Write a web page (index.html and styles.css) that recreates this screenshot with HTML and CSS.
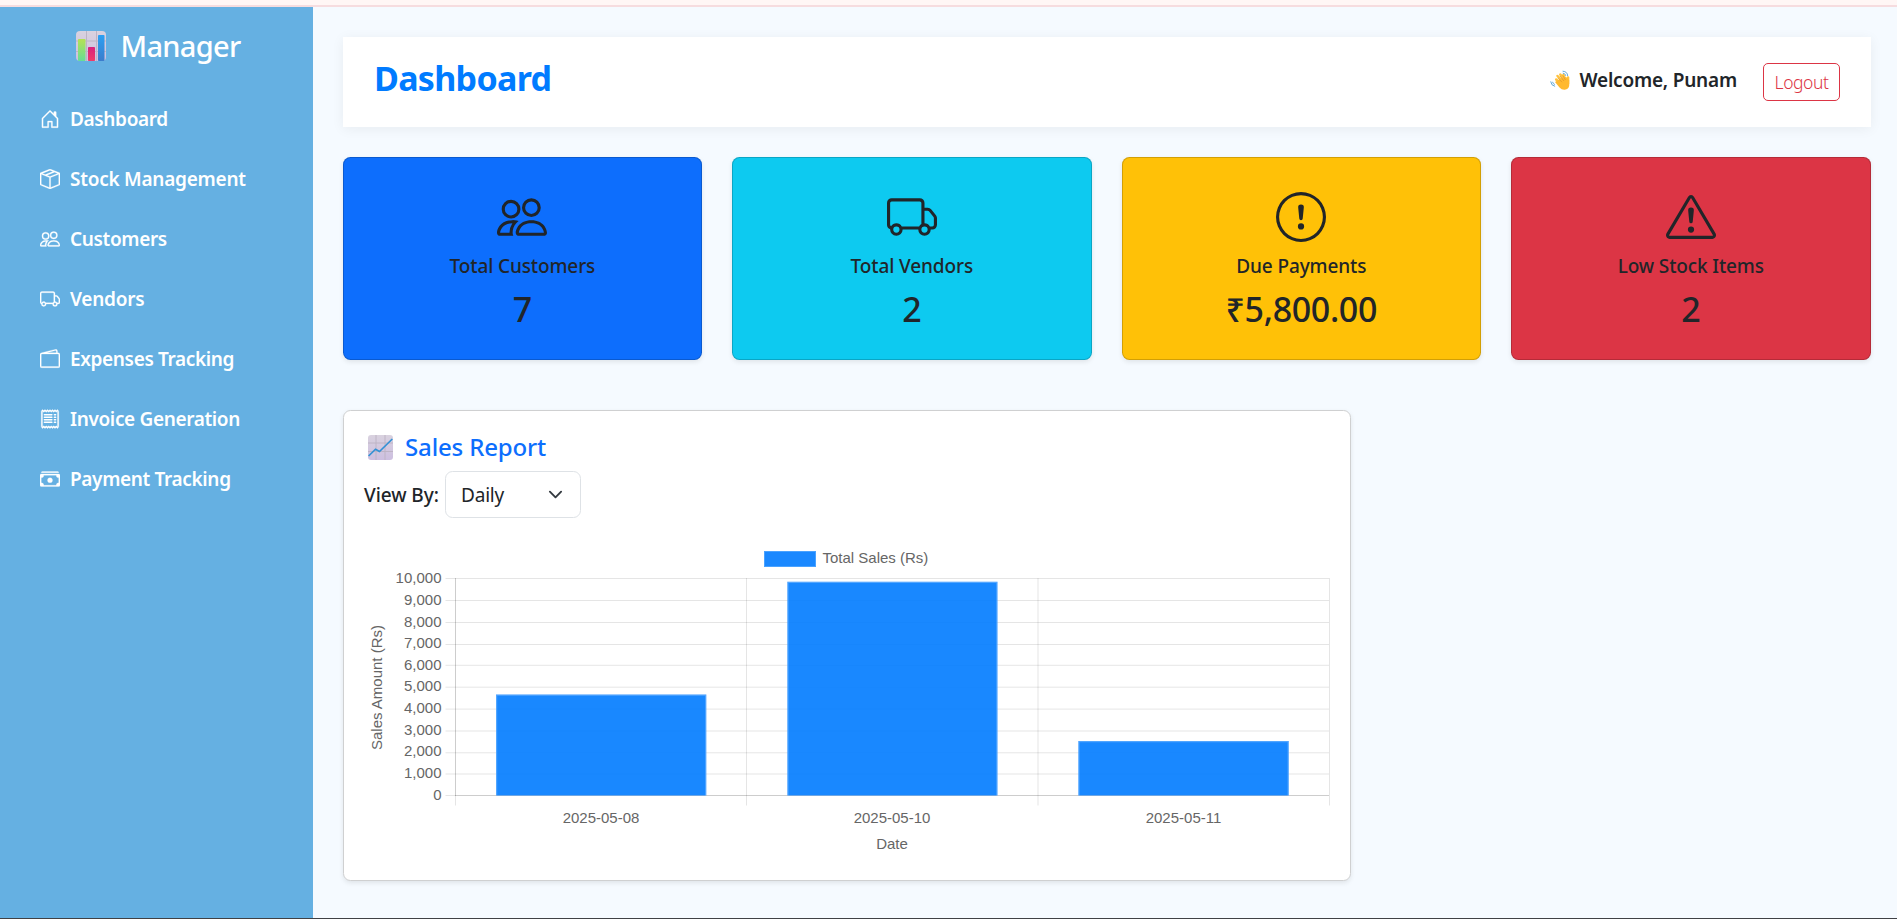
FILE: index.html
```html
<!DOCTYPE html>
<html lang="en">
<head>
<meta charset="utf-8">
<title>Dashboard</title>
<link rel="stylesheet" href="styles.css">
</head>
<body>
<svg class="sprite" aria-hidden="true">
  <symbol id="people" viewBox="0 0 16 16"><path d="M15 14s1 0 1-1-1-4-5-4-5 3-5 4 1 1 1 1zm-7.978-1L7 12.996c.001-.264.167-1.03.76-1.72C8.312 10.629 9.282 10 11 10c1.717 0 2.687.63 3.24 1.276.593.69.758 1.457.76 1.72l-.008.002-.014.002zM11 7a2 2 0 1 0 0-4 2 2 0 0 0 0 4m3-2a3 3 0 1 1-6 0 3 3 0 0 1 6 0M6.936 9.28a6 6 0 0 0-1.23-.247A7 7 0 0 0 5 9c-4 0-5 3-5 4q0 1 1 1h4.216A2.24 2.24 0 0 1 5 13c0-1.01.377-2.042 1.09-2.904.243-.294.526-.569.846-.816M4.92 10A5.5 5.5 0 0 0 4 13H1c0-.26.164-1.03.76-1.724.545-.636 1.492-1.256 3.16-1.275ZM1.5 5.5a3 3 0 1 1 6 0 3 3 0 0 1-6 0m3-2a2 2 0 1 0 0 4 2 2 0 0 0 0-4"/></symbol>
  <symbol id="truck" viewBox="0 0 16 16"><path d="M0 3.5A1.5 1.5 0 0 1 1.5 2h9A1.5 1.5 0 0 1 12 3.5V5h1.02a1.5 1.5 0 0 1 1.17.563l1.481 1.85a1.5 1.5 0 0 1 .329.938V10.5a1.5 1.5 0 0 1-1.5 1.5H14a2 2 0 1 1-4 0H5a2 2 0 1 1-3.998-.085A1.5 1.5 0 0 1 0 10.5zm1.294 7.456A2 2 0 0 1 4.732 11h5.536a2 2 0 0 1 .732-.732V3.5a.5.5 0 0 0-.5-.5h-9a.5.5 0 0 0-.5.5v7a.5.5 0 0 0 .294.456M12 10a2 2 0 0 1 1.732 1h.768a.5.5 0 0 0 .5-.5V8.35a.5.5 0 0 0-.11-.312l-1.48-1.85A.5.5 0 0 0 13.02 6H12zm-9 1a1 1 0 1 0 0 2 1 1 0 0 0 0-2m9 0a1 1 0 1 0 0 2 1 1 0 0 0 0-2"/></symbol>
  <symbol id="alert-circle" viewBox="0 0 16 16"><path d="M8 15A7 7 0 1 1 8 1a7 7 0 0 1 0 14m0 1A8 8 0 1 0 8 0a8 8 0 0 0 0 16"/><path d="M7.002 11a1 1 0 1 1 2 0 1 1 0 0 1-2 0M7.1 4.995a.905.905 0 1 1 1.8 0l-.35 3.507a.552.552 0 0 1-1.1 0z"/></symbol>
  <symbol id="alert-triangle" viewBox="0 0 16 16"><path d="M7.938 2.016A.13.13 0 0 1 8.002 2a.13.13 0 0 1 .063.016.15.15 0 0 1 .054.057l6.857 11.667c.036.06.035.124.002.183a.2.2 0 0 1-.054.06.1.1 0 0 1-.066.017H1.146a.1.1 0 0 1-.066-.017.2.2 0 0 1-.054-.06.18.18 0 0 1 .002-.183L7.884 2.073a.15.15 0 0 1 .054-.057m1.044-.45a1.13 1.13 0 0 0-1.96 0L.165 13.233c-.457.778.091 1.767.98 1.767h13.713c.889 0 1.438-.99.98-1.767z"/><path d="M7.002 12a1 1 0 1 1 2 0 1 1 0 0 1-2 0M7.1 5.995a.905.905 0 1 1 1.8 0l-.35 3.507a.552.552 0 0 1-1.1 0z"/></symbol>
  <symbol id="house" viewBox="0 0 16 16"><path d="M8.354 1.146a.5.5 0 0 0-.708 0l-6 6A.5.5 0 0 0 1.5 7.5v7a.5.5 0 0 0 .5.5h4.5a.5.5 0 0 0 .5-.5v-4h2v4a.5.5 0 0 0 .5.5H14a.5.5 0 0 0 .5-.5v-7a.5.5 0 0 0-.146-.354L13 5.793V2.5a.5.5 0 0 0-.5-.5h-1a.5.5 0 0 0-.5.5v1.293zM2.5 14V7.707l5.5-5.5 5.5 5.5V14H10v-4a.5.5 0 0 0-.5-.5h-3a.5.5 0 0 0-.5.5v4z"/></symbol>
  <symbol id="box" viewBox="0 0 16 16"><path d="M8.186 1.113a.5.5 0 0 0-.372 0L1.846 3.5l2.404.961L10.404 2zm3.564 1.426L5.596 5 8 5.961 14.154 3.5zm3.25 1.7-6.5 2.6v7.922l6.5-2.6V4.24zM7.5 14.762V6.838L1 4.239v7.923zM7.443.184a1.5 1.5 0 0 1 1.114 0l7.129 2.852A.5.5 0 0 1 16 3.5v8.662a1 1 0 0 1-.629.928l-7.185 2.874a.5.5 0 0 1-.372 0L.63 13.09a1 1 0 0 1-.63-.928V3.5a.5.5 0 0 1 .314-.464z"/></symbol>
  <symbol id="wallet" viewBox="0 0 16 16"><path d="M12.136.326A1.5 1.5 0 0 1 14 1.78V3h.5A1.5 1.5 0 0 1 16 4.5v9a1.5 1.5 0 0 1-1.5 1.5h-13A1.5 1.5 0 0 1 0 13.5v-9a1.5 1.5 0 0 1 1.432-1.499zM5.562 3H13V1.78a.5.5 0 0 0-.621-.484zM1.5 4a.5.5 0 0 0-.5.5v9a.5.5 0 0 0 .5.5h13a.5.5 0 0 0 .5-.5v-9a.5.5 0 0 0-.5-.5z"/></symbol>
  <symbol id="receipt" viewBox="0 0 16 16"><path d="M1.92.506a.5.5 0 0 1 .434.14L3 1.293l.646-.647a.5.5 0 0 1 .708 0L5 1.293l.646-.647a.5.5 0 0 1 .708 0L7 1.293l.646-.647a.5.5 0 0 1 .708 0L9 1.293l.646-.647a.5.5 0 0 1 .708 0l.646.647.646-.647a.5.5 0 0 1 .708 0l.646.647.646-.647a.5.5 0 0 1 .801.13l.5 1A.5.5 0 0 1 15 2v12a.5.5 0 0 1-.053.224l-.5 1a.5.5 0 0 1-.8.13L13 14.707l-.646.647a.5.5 0 0 1-.708 0L11 14.707l-.646.647a.5.5 0 0 1-.708 0L9 14.707l-.646.647a.5.5 0 0 1-.708 0L7 14.707l-.646.647a.5.5 0 0 1-.708 0L5 14.707l-.646.647a.5.5 0 0 1-.708 0L3 14.707l-.646.647a.5.5 0 0 1-.801-.13l-.5-1A.5.5 0 0 1 1 14V2a.5.5 0 0 1 .053-.224l.5-1a.5.5 0 0 1 .367-.27m.217 1.338L2 2.118v11.764l.137.274.51-.51a.5.5 0 0 1 .707 0l.646.647.646-.646a.5.5 0 0 1 .708 0l.646.646.646-.646a.5.5 0 0 1 .708 0l.646.646.646-.646a.5.5 0 0 1 .708 0l.646.646.646-.646a.5.5 0 0 1 .708 0l.646.646.646-.646a.5.5 0 0 1 .708 0l.509.509.137-.274V2.118l-.137-.274-.51.51a.5.5 0 0 1-.707 0L12 1.707l-.646.647a.5.5 0 0 1-.708 0L10 1.707l-.646.647a.5.5 0 0 1-.708 0L8 1.707l-.646.647a.5.5 0 0 1-.708 0L6 1.707l-.646.647a.5.5 0 0 1-.708 0L4 1.707l-.646.647a.5.5 0 0 1-.708 0z"/><path d="M3.5 4.5h6M3.5 6.5h6M3.5 8.5h6M3.5 10.5h6M11.5 4.5h1M11.5 6.5h1M11.5 8.5h1M11.5 10.5h1" stroke="currentColor" stroke-width="1.200" stroke-linecap="round"/></symbol>
  <symbol id="cash" viewBox="0 0 16 16"><path d="M1 3a1 1 0 0 1 1-1h12a1 1 0 0 1 1 1zm7 8a2 2 0 1 0 0-4 2 2 0 0 0 0 4"/><path d="M0 5a1 1 0 0 1 1-1h14a1 1 0 0 1 1 1v8a1 1 0 0 1-1 1H1a1 1 0 0 1-1-1zm3 0a2 2 0 0 1-2 2v4a2 2 0 0 1 2 2h10a2 2 0 0 1 2-2V7a2 2 0 0 1-2-2z"/></symbol>
</svg>

<div class="top-strip"></div>
<div class="layout">
  <aside class="sidebar">
    <div class="brand">
      <svg class="brand-icon" viewBox="0 0 30 30">
        <defs>
          <linearGradient id="tile" x2="0" y2="1"><stop stop-color="#d9d2df"/><stop offset="1" stop-color="#cdbfe0"/></linearGradient>
          <linearGradient id="green" x2="0" y2="1"><stop stop-color="#b5e254"/><stop offset="1" stop-color="#66dd96"/></linearGradient>
          <linearGradient id="pink" x2="0" y2="1"><stop stop-color="#d8217e"/><stop offset="1" stop-color="#f03b68"/></linearGradient>
          <linearGradient id="blue" x2="0" y2="1"><stop stop-color="#2ba0f3"/><stop offset="1" stop-color="#3c7ccc"/></linearGradient>
        </defs>
        <rect width="30" height="30" rx="4" fill="url(#tile)"/>
        <path d="M10.5 0v30M20.500 0v30M0 10h30M0 20.500h30" stroke="#bdb4c4"/>
        <rect x="2" y="8" width="7.500" height="22" rx=".8" fill="url(#green)"/>
        <rect x="12" y="16" width="7" height="14" rx=".8" fill="url(#pink)"/>
        <rect x="22" y="4" width="6.500" height="26" rx=".8" fill="url(#blue)"/>
      </svg>
      <span>Manager</span>
    </div>
    <nav class="nav">
      <a class="nav-item"><svg class="nav-icon"><use href="#house"/></svg><span>Dashboard</span></a>
      <a class="nav-item"><svg class="nav-icon"><use href="#box"/></svg><span class="t-loose">Stock Management</span></a>
      <a class="nav-item"><svg class="nav-icon"><use href="#people"/></svg><span>Customers</span></a>
      <a class="nav-item"><svg class="nav-icon"><use href="#truck"/></svg><span class="t-loose">Vendors</span></a>
      <a class="nav-item"><svg class="nav-icon"><use href="#wallet"/></svg><span>Expenses Tracking</span></a>
      <a class="nav-item"><svg class="nav-icon"><use href="#receipt"/></svg><span>Invoice Generation</span></a>
      <a class="nav-item"><svg class="nav-icon"><use href="#cash"/></svg><span>Payment Tracking</span></a>
    </nav>
  </aside>

  <main class="main">
    <header class="header">
      <h1 class="title">Dashboard</h1>
      <div class="user">
        <svg class="wave" viewBox="0 0 20 20">
          <g fill="none" stroke-linecap="round">
            <path d="M13 1.200q4.500.3 4.700 4.500M13.200 3.200q2.200.3 2.500 2.200M.7 11.800q.4 3.800 4 4.500M2.600 12.200q.3 1.600 1.900 2.200" stroke="#62a9db" stroke-width="1"/>
            <path d="M6.200 9.500l5 5M7.500 6l5.500 6M10.300 4.600l4.500 6M13.300 5l2.500 5" stroke="#ffc23e" stroke-width="2.500"/>
            <path d="M18 7.500v6" stroke="#ffc23e" stroke-width="2.600"/>
          </g>
          <path d="M5 12l7-4 4-1 3.200 3v5.500q-.5 4-4.500 4.200-3 .2-5.200-2.200z" fill="#ffb92f"/>
          <path d="M8 8.200l4 4M10 6l4 5M12.800 5.500l2.700 4.500" stroke="#d98c2b" stroke-width=".6"/>
        </svg>
        <span class="welcome">Welcome, Punam</span>
        <button class="logout">Logout</button>
      </div>
    </header>

    <section class="stats">
      <div class="stat stat-blue"><svg class="stat-icon"><use href="#people"/></svg><div class="stat-label">Total Customers</div><div class="stat-value">7</div></div>
      <div class="stat stat-cyan"><svg class="stat-icon"><use href="#truck"/></svg><div class="stat-label">Total Vendors</div><div class="stat-value">2</div></div>
      <div class="stat stat-yellow"><svg class="stat-icon"><use href="#alert-circle"/></svg><div class="stat-label">Due Payments</div><div class="stat-value">₹5,800.00</div></div>
      <div class="stat stat-red"><svg class="stat-icon"><use href="#alert-triangle"/></svg><div class="stat-label">Low Stock Items</div><div class="stat-value">2</div></div>
    </section>

    <section class="report">
      <h2 class="report-title">
        <svg class="report-icon" viewBox="0 0 25 25">
          <rect width="25" height="25" rx="3" fill="url(#tile)"/>
          <path d="M8 0v25M17 0v25M0 8h25M0 16.500h25" stroke="#bcb2c3" stroke-width=".9"/>
          <path d="M.6 21L7.500 14.200l4 2.300L24.300 4" fill="none" stroke="#3391d5" stroke-width="1.700"/>
        </svg>
        <span>Sales Report</span>
      </h2>
      <div class="filter">
        <span class="filter-label">View By:</span>
        <div class="select"><span>Daily</span><svg class="chevron" viewBox="0 0 16 16"><path d="m2 5 6 6 6-6" fill="none" stroke="#343a40" stroke-width="2" stroke-linecap="round" stroke-linejoin="round"/></svg></div>
      </div>
      <svg class="chart" viewBox="363 541 968 320">
        <rect x="764.500" y="551.500" width="51" height="15" fill="#1a88ff" stroke="#4aa2ff"/>
        <text x="822.500" y="563">Total Sales (Rs)</text>
        <g class="grid">
          <path d="M445.500 578.500H1329M445.500 600.500H1329M445.500 622.500H1329M445.500 644.500H1329M445.500 665.300H1329M445.500 687.200H1329M445.500 709.100H1329M445.500 731H1329M445.500 752.800H1329M445.500 774H1329M445.500 795.500H1329"/>
          <path d="M455.500 578V805.500M746.500 578V805.500M1038 578V805.500M1329.500 578V805.500"/>
          <path d="M455.500 578V796M455 795.500H1329"/>
        </g>
        <g class="bars">
          <path d="M496 795.500V694.500H706.300V795.500"/>
          <path d="M787.300 795.500V581.700H997.500V795.500"/>
          <path d="M1078.300 795.500V741H1288.800V795.500"/>
        </g>
        <g class="bar-edges">
          <path d="M496.600 795.500V695.100H705.700V795.500"/>
          <path d="M787.900 795.500V582.300H996.900V795.500"/>
          <path d="M1078.900 795.500V741.600H1288.200V795.500"/>
        </g>
        <g text-anchor="end">
          <text x="441.500" y="583">10,000</text><text x="441.500" y="605">9,000</text><text x="441.500" y="627">8,000</text><text x="441.500" y="648">7,000</text><text x="441.500" y="670">6,000</text><text x="441.500" y="691">5,000</text><text x="441.500" y="713">4,000</text><text x="441.500" y="735">3,000</text><text x="441.500" y="756">2,000</text><text x="441.500" y="778">1,000</text><text x="441.500" y="800">0</text>
        </g>
        <g text-anchor="middle">
          <text x="601" y="823">2025-05-08</text><text x="892" y="823">2025-05-10</text><text x="1183.500" y="823">2025-05-11</text>
          <text x="892" y="849">Date</text>
          <text transform="translate(382 687.500) rotate(-90)">Sales Amount (Rs)</text>
        </g>
      </svg>
    </section>
  </main>
</div>
<div class="bottom-strip"></div>
</body>
</html>
```
FILE: styles.css
```css
* { box-sizing: border-box; }
body {
  margin: 0;
  height: 919px;
  display: flex;
  flex-direction: column;
  overflow: hidden;
  background: #f5faff;
  color: #212529;
  font-family: "Noto Sans", "Open Sans", sans-serif;
}
h1, h2 { margin: 0; }
.sprite { display: none; }
.top-strip { flex: none; height: 7px; background: #fff6f5; border-bottom: 2px solid #f6dcdf; }
.bottom-strip { flex: none; height: 1px; background: #3f4145; }
.layout { flex: 1; min-height: 0; display: flex; }

.sidebar { flex: none; width: 313px; background: #65b0e2; color: #fff; }
.brand {
  display: flex;
  align-items: center;
  gap: 14.500px;
  height: 78px;
  padding-left: 76px;
  font-size: 29px;
  font-weight: 550;
  letter-spacing: -.7px;
  line-height: 40px;
}
.brand-icon { width: 30px; height: 30px; }
.nav { padding-top: 4px; }
.nav-item {
  display: flex;
  align-items: center;
  gap: 10px;
  height: 60px;
  padding-left: 40px;
  font-size: 19px;
  font-weight: 600;
  letter-spacing: -.35px;
}
.nav-item .t-loose { letter-spacing: -.25px; }
.nav-icon { width: 20px; height: 20px; fill: currentColor; stroke: currentColor; stroke-width: .2; }

.main { flex: 1; padding: 30px 26px 0 30px; }
.header {
  display: flex;
  justify-content: space-between;
  height: 90px;
  padding: 0 31px;
  background: #fff;
  box-shadow: 0 2px 12px rgba(0, 0, 0, .06);
}
.title {
  color: #007bff;
  font-size: 34px;
  line-height: 82px;
  letter-spacing: -.7px;
}
.user { display: flex; align-items: center; }
.wave { width: 20px; height: 20px; margin: -5px 9px 0 0; }
.welcome { font-size: 19px; font-weight: 600; letter-spacing: -.2px; line-height: 28px; margin: -5px 26px 0 0; }
.logout {
  width: 77px;
  height: 38px;
  padding: 0;
  background: #fff;
  border: 1px solid #dc3545;
  border-radius: 5px;
  color: #dc3545;
  font: 350 17.500px/36px "Noto Sans", sans-serif;
  letter-spacing: -.45px;
}

.stats { display: grid; grid-template-columns: repeat(4, 1fr); gap: 30px; margin: 30px .5px 0 -.4px; }
.stat {
  display: flex;
  flex-direction: column;
  align-items: center;
  height: 203px;
  padding-top: 34px;
  border: 1px solid rgba(0, 0, 0, .175);
  border-radius: 7.5px;
  box-shadow: 0 2px 5px rgba(0, 0, 0, .09);
}
.stat-blue { background: #0d6efd; }
.stat-cyan { background: #0dcaf0; }
.stat-yellow { background: #ffc107; }
.stat-red { background: #dc3545; }
.stat-icon { width: 50px; height: 50px; fill: currentColor; }
.stat-label { margin-top: 12px; font-size: 19px; font-weight: 500; line-height: 24px; letter-spacing: -.12px; }
.stat-value { margin-top: 10px; font-size: 34px; font-weight: 550; line-height: 42px; letter-spacing: -.35px; }

.report {
  width: 1008px;
  height: 471px;
  margin-top: 50px;
  padding: 19px 19px 0;
  background: #fff;
  border: 1px solid #cfd0d1;
  border-radius: 7.500px;
  box-shadow: 0 2px 5px rgba(0, 0, 0, .09);
}
.report-title {
  display: flex;
  align-items: center;
  gap: 12px;
  height: 34px;
  padding-left: 5px;
  color: #0d6efd;
  font-size: 24px;
  font-weight: 500;
  letter-spacing: -.15px;
}
.report-title span { margin-top: -1px; }
.filter { display: flex; align-items: center; gap: 6px; height: 47px; margin-top: 7px; }
.report-icon { width: 25px; height: 25px; }
.filter-label { font-size: 19px; font-weight: 550; letter-spacing: -.05px; width: 76px; white-space: nowrap; padding-left: 1px; }
.select {
  display: flex;
  align-items: center;
  justify-content: space-between;
  width: 136px;
  height: 47px;
  padding: 0 17px 0 15px;
  border: 1px solid #dee2e6;
  border-radius: 7.500px;
  font-size: 19px;
  letter-spacing: -.2px;
}
.chevron { width: 15px; height: 15px; }
.chart { display: block; width: 968px; height: 320px; margin-top: 23px; }
.chart text { font: 15px "Liberation Sans", Arial, sans-serif; fill: #666; }
.grid path { fill: none; stroke: rgba(0, 0, 0, .1); }
.bars path { fill: rgba(0, 123, 255, .9); }
.bar-edges path { fill: none; stroke: rgba(255, 255, 255, .25); stroke-width: 1.200; }
```
